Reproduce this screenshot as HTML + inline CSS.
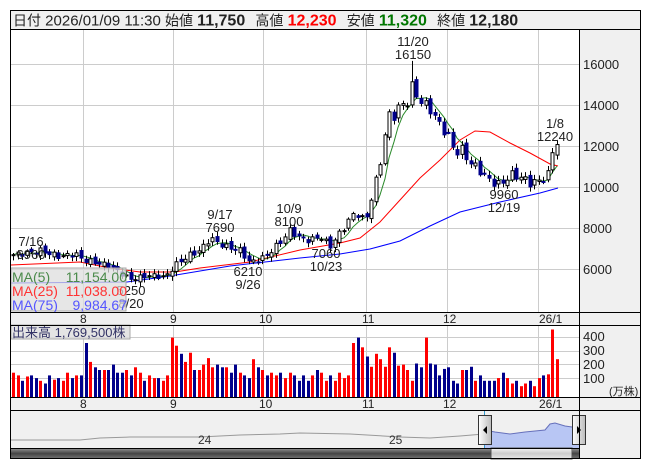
<!DOCTYPE html>
<html><head><meta charset="utf-8">
<style>
body{margin:0;background:#fff;width:653px;height:470px;overflow:hidden;font-family:"Liberation Sans","Noto Sans CJK JP",sans-serif;}
svg{position:absolute;left:0;top:0}
text{font-family:"Liberation Sans","Noto Sans CJK JP",sans-serif}
</style></head><body>
<svg id="s" width="653" height="470" xmlns="http://www.w3.org/2000/svg">
<defs>
<linearGradient id="dk" x1="0" y1="0" x2="0" y2="1"><stop offset="0" stop-color="#999"/><stop offset="0.5" stop-color="#444"/><stop offset="1" stop-color="#777"/></linearGradient>
<linearGradient id="lt" x1="0" y1="0" x2="0" y2="1"><stop offset="0" stop-color="#f4f4f4"/><stop offset="0.5" stop-color="#ccc"/><stop offset="1" stop-color="#e8e8e8"/></linearGradient>
<linearGradient id="hd" x1="0" y1="0" x2="1" y2="0"><stop offset="0" stop-color="#fff"/><stop offset="1" stop-color="#bbb"/></linearGradient>
</defs>
<rect x="10.5" y="10.5" width="630" height="19" fill="#f0f0f0" stroke="#000"/>
<text x="13" y="25.5" font-size="15" fill="#222"><tspan font-size="14">日付</tspan> 2026/01/09 11:30 <tspan font-size="14">始値</tspan> <tspan font-weight="bold" font-size="16">11,750</tspan> <tspan font-size="14" dx="6">高値</tspan> <tspan font-weight="bold" fill="#f00" font-size="16">12,230</tspan> <tspan font-size="14" dx="6">安値</tspan> <tspan font-weight="bold" fill="#070" font-size="16">11,320</tspan> <tspan font-size="14" dx="6">終値</tspan> <tspan font-weight="bold" font-size="16">12,180</tspan></text>
<rect x="579" y="30" width="61" height="429" fill="#f0f0f0"/>
<rect x="11" y="312" width="629" height="13" fill="#f0f0f0"/>
<rect x="11" y="397" width="629" height="13" fill="#f0f0f0"/>
<g id="grid" stroke="#ccc" stroke-width="1"></g>
<g id="ma"></g>
<g id="cand"></g>
<g id="vol"></g>
<g font-size="13" fill="#222">
<text x="583" y="69">16000</text><text x="583" y="110">14000</text><text x="583" y="151">12000</text><text x="583" y="192">10000</text><text x="583" y="233">8000</text><text x="583" y="274">6000</text>
<text x="583" y="341">400</text><text x="583" y="355">300</text><text x="583" y="369">200</text><text x="583" y="383">100</text>
<text x="609" y="395" font-size="11">(万株)</text>
</g>
<g font-size="12" fill="#222">
<text x="80" y="323">8</text><text x="170" y="323">9</text><text x="259" y="323">10</text><text x="362" y="323">11</text><text x="443" y="323">12</text><text x="539" y="323">26/1</text>
<text x="80" y="408">8</text><text x="170" y="408">9</text><text x="259" y="408">10</text><text x="362" y="408">11</text><text x="443" y="408">12</text><text x="539" y="408">26/1</text>
</g>
<g font-size="13" fill="#222" text-anchor="middle">
<text x="31" y="246">7/16</text><text x="31" y="259">6960</text>
<text x="220" y="219">9/17</text><text x="220" y="232">7690</text>
<text x="248" y="276">6210</text><text x="248" y="289">9/26</text>
<text x="289" y="213">10/9</text><text x="289" y="226">8100</text>
<text x="326" y="258">7060</text><text x="326" y="271">10/23</text>
<text x="131" y="295">5250</text><text x="131" y="308">8/20</text>
<text x="413" y="46">11/20</text><text x="413" y="59">16150</text>
<text x="504" y="199">9960</text><text x="504" y="212">12/19</text>
<text x="555" y="128">1/8</text><text x="555" y="141">12240</text>
</g>
<rect x="11" y="268" width="115" height="43" fill="#ddd" fill-opacity="0.75" stroke="#aaa"/>
<g font-size="14">
<text x="12" y="282" fill="#4a8a4a">MA(5)</text><text x="127" y="282" fill="#4a8a4a" text-anchor="end">11,154.00</text>
<text x="12" y="296" fill="#f33">MA(25)</text><text x="127" y="296" fill="#f33" text-anchor="end">11,038.00</text>
<text x="12" y="310" fill="#55f">MA(75)</text><text x="127" y="310" fill="#55f" text-anchor="end">9,984.67</text>
</g>
<rect x="11" y="325" width="119" height="14" fill="#ddd" fill-opacity="0.8" stroke="#aaa"/>
<text x="12" y="337" font-size="13" fill="#336">出来高  1,769,500株</text>
<rect x="11" y="410" width="568" height="38" fill="#f0f0f0"/>
<path d="M484,430 L495,432 L510,434 L525,432 L535,431 L545,430 L550,424 L555,423 L565,426 L579,428 L579,448 L484,448Z" fill="#b8c6f4"/>
<path d="M484,430 L495,432 L510,434 L525,432 L535,431 L545,430 L550,424 L555,423 L565,426 L579,428" fill="none" stroke="#6670bb"/>
<path d="M11,440 L80,440 L100,438 L130,437 L200,437 L240,435 L280,434 L300,433 L350,434 L400,437 L430,438 L460,436 L484,434" fill="none" stroke="#999"/>
<text x="198" y="444" font-size="12" fill="#333">24</text><text x="389" y="444" font-size="12" fill="#333">25</text>
<line x1="484.5" y1="410" x2="484.5" y2="459" stroke="#39c"/><line x1="579.5" y1="410" x2="579.5" y2="459" stroke="#39c"/>
<rect x="478.5" y="415.5" width="13" height="29" fill="url(#hd)" stroke="#333"/><path d="M487,426 L483,430 L487,434Z" fill="#000"/>
<rect x="572.5" y="415.5" width="13" height="29" fill="url(#hd)" stroke="#333"/><path d="M577,426 L581,430 L577,434Z" fill="#000"/>
<rect x="11" y="448" width="480" height="11" fill="url(#dk)"/>
<rect x="491" y="448" width="81" height="11" fill="url(#lt)" stroke="#555"/>
<rect x="572" y="448" width="7" height="11" fill="url(#dk)"/>
<g stroke="#000" fill="none">
<rect x="10.5" y="10.5" width="630" height="448"/>
<line x1="579.5" y1="30" x2="579.5" y2="459"/>
<line x1="11" y1="312.5" x2="640" y2="312.5"/><line x1="11" y1="325.5" x2="640" y2="325.5"/>
<line x1="11" y1="397.5" x2="640" y2="397.5"/><line x1="11" y1="410.5" x2="640" y2="410.5"/>
<line x1="11" y1="448.5" x2="579" y2="448.5"/>
</g>
</svg>
<script>
var NS="http://www.w3.org/2000/svg";
function el(p,t,a){var e=document.createElementNS(NS,t);for(var k in a)e.setAttribute(k,a[k]);document.getElementById(p).appendChild(e);return e;}
[83,173,263,366,447,538].forEach(function(x){el("grid","line",{x1:x+.5,y1:30,x2:x+.5,y2:312});el("grid","line",{x1:x+.5,y1:326,x2:x+.5,y2:397});});
[64,105,146,187,228,269].forEach(function(y){el("grid","line",{x1:11,y1:y+.5,x2:579,y2:y+.5});});
[337,351,364,378].forEach(function(y){el("grid","line",{x1:11,y1:y+.5,x2:579,y2:y+.5});});
function Y(p){return 269-(p-6000)*0.0205;}
var A=[[13,6700],[30,6800],[40,6900],[60,6600],[75,6750],[83,6450],[110,6150],[130,5500],[150,5700],[165,5600],[175,6200],[190,6700],[200,6900],[210,7500],[225,7100],[240,6900],[250,6300],[265,6600],[280,7300],[290,7900],[300,7500],[310,7400],[320,7600],[330,7100],[345,8100],[355,8800],[365,8300],[373,9800],[378,10700],[383,12000],[388,13500],[395,13500],[400,14000],[407,14100],[412,14900],[420,14200],[430,13800],[440,13000],[447,12600],[455,11700],[462,11800],[470,11200],[480,10800],[490,10300],[500,10100],[510,10600],[520,10500],[530,10200],[540,10300],[548,10600],[553,11900],[557,12180]];
function P(x){for(var i=1;i<A.length;i++){if(x<=A[i][0]){var a=A[i-1],b=A[i];return a[1]+(b[1]-a[1])*(x-a[0])/(b[0]-a[0]);}}return A[A.length-1][1];}
var n=121,cl=[],xs=[];
for(var i=0;i<n;i++){var x=13+i*(544/(n-1));xs.push(x);cl.push(P(x)+Math.sin(i*2.3)*Math.min(250,P(x)*0.02));}
var vh=[45,40,30,38,40,35,30,25,40,32,35,30,45,35,40,40,100,65,55,50,50,50,60,45,45,50,40,55,45,30,40,35,35,30,40,110,95,80,65,82,50,50,60,72,55,60,55,55,45,60,45,40,35,70,55,50,40,45,40,45,35,45,40,30,40,30,40,50,45,30,40,30,45,35,40,100,110,92,75,56,80,70,56,92,82,58,60,50,30,62,55,110,62,60,40,52,55,30,25,50,50,56,30,40,30,30,30,35,45,35,25,30,20,25,30,20,35,40,42,125,70];
var g5=[];
for(var i=0;i<n;i++){var c=cl[i],o=i?cl[i-1]+Math.cos(i*1.7)*120:c-50;var up=c>=o;
 var hi=Math.max(o,c)+80+Math.abs(Math.sin(i*3.1))*150,lo=Math.min(o,c)-80-Math.abs(Math.cos(i*2.7))*150;
 if(i==88){hi=16150;}
 var x=Math.round(xs[i]);
 el("cand","line",{x1:x+.5,y1:Y(hi),x2:x+.5,y2:Y(lo),stroke:"#000"});
 var yt=Y(Math.max(o,c)),yb=Y(Math.min(o,c));if(yb-yt<1)yb=yt+1;
 el("cand","rect",{x:x-1,y:yt,width:3,height:yb-yt,fill:up?"#fff":"#00008b",stroke:up?"#000":"#00008b","stroke-width":1});
 var v=vh[i]||40;
 el("vol","rect",{x:x-1,y:397-v*0.54,width:3,height:v*0.54,fill:up?"#f00":"#00008b"});
 var s=0,k=0;for(var j=Math.max(0,i-4);j<=i;j++){s+=cl[j];k++;}g5.push(x+","+Y(s/k).toFixed(1));
}
el("ma","polyline",{points:"11,283 127,282 170,276 230,266 300,258 340,254 370,249 400,241 430,226 460,212 500,202 540,193 558,188",fill:"none",stroke:"#00f"});
el("ma","polyline",{points:"11,265 80,262 110,268 140,272 175,272 200,268 250,262 300,250 340,243 360,238 380,222 400,200 420,178 440,160 460,140 475,131 490,132 510,143 530,153 550,164 558,166",fill:"none",stroke:"#f00"});
el("ma","polyline",{points:g5.join(" "),fill:"none",stroke:"#2a8a2a"});
</script>
</body></html>
